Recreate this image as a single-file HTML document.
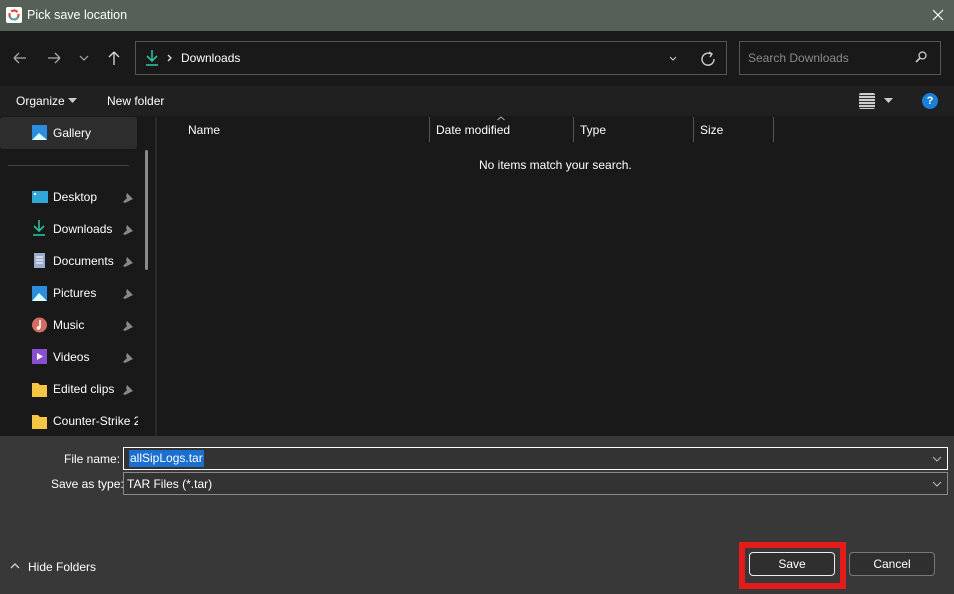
<!DOCTYPE html>
<html><head><meta charset="utf-8"><style>
*{box-sizing:border-box;margin:0;padding:0}
body{width:954px;height:594px;overflow:hidden;background:#191919;font-family:"Liberation Sans",sans-serif;font-size:12px;color:#fff;position:relative}
.a{position:absolute}
.t{white-space:nowrap}
</style></head><body>
<div class="a" style="left:0;top:0;width:954px;height:31px;background:#566056"></div>
<div class="a" style="left:6px;top:7px;width:16px;height:16px;background:#fff;border-radius:2px"></div>
<svg class="a" style="left:6px;top:7px" width="16" height="16"><circle cx="8" cy="8" r="4.5" fill="none" stroke="#e04a3a" stroke-width="2.2" stroke-dasharray="7 2"/><path d="M4 10 A4.5 4.5 0 0 0 12 10" fill="none" stroke="#4ab0b0" stroke-width="2.2"/></svg>
<div class="a t" style="left:27px;top:8px;font-size:12.5px;color:#fff">Pick save location</div>
<svg class="a" style="left:932px;top:9px" width="12" height="12"><path d="M1 1L11 11M11 1L1 11" stroke="#fff" stroke-width="1.2"/></svg>
<svg class="a" style="left:10px;top:50px" width="120" height="16"><path d="M4 8H16M4 8L9 3M4 8L9 13" stroke="#aaa" stroke-width="1.3" fill="none"/><path d="M38 8H50M50 8L45 3M50 8L45 13" stroke="#aaa" stroke-width="1.3" fill="none"/><path d="M70 6L74 10L78 6" stroke="#aaa" stroke-width="1.2" fill="none"/><path d="M104 2V15M104 2L99 7M104 2L109 7" stroke="#ddd" stroke-width="1.3" fill="none"/></svg>
<div class="a" style="left:135px;top:41px;width:592px;height:34px;border:1px solid #555"></div>
<svg class="a" style="left:145px;top:49px" width="40" height="18"><path d="M7 1V12M2 7L7 12L12 7" stroke="#2bbf9c" stroke-width="1.6" fill="none"/><path d="M1 16H13" stroke="#2bbf9c" stroke-width="1.6"/><path d="M23 6L26 9L23 12" stroke="#ddd" stroke-width="1.3" fill="none"/></svg>
<div class="a t" style="left:181px;top:51px">Downloads</div>
<svg class="a" style="left:668px;top:51px" width="50" height="16"><path d="M2 6L5 9L8 6" stroke="#ccc" stroke-width="1.1" fill="none"/><path d="M46 8A6 6 0 1 1 43 3" stroke="#ccc" stroke-width="1.4" fill="none"/><path d="M41 1L44 3L42 6" stroke="#ccc" stroke-width="1.4" fill="none"/></svg>
<div class="a" style="left:739px;top:41px;width:202px;height:34px;border:1px solid #555"></div>
<div class="a t" style="left:748px;top:51px;color:#8a8a8a">Search Downloads</div>
<svg class="a" style="left:914px;top:50px" width="14" height="14"><circle cx="8.5" cy="5.5" r="3.5" stroke="#ccc" stroke-width="1.3" fill="none"/><path d="M6 8L2 12" stroke="#ccc" stroke-width="1.6"/></svg>
<div class="a" style="left:0;top:86px;width:954px;height:30px;background:#202020"></div>
<div class="a t" style="left:16px;top:94px">Organize</div>
<svg class="a" style="left:68px;top:98px" width="10" height="6"><path d="M0 0H9L4.5 5Z" fill="#ccc"/></svg>
<div class="a t" style="left:107px;top:94px">New folder</div>
<div class="a" style="left:859px;top:93px;width:16px;height:16px;border-radius:2px;background-image:repeating-linear-gradient(#ccc 0 2px,#333 2px 3px)"></div>
<svg class="a" style="left:884px;top:98px" width="10" height="6"><path d="M0 0H9L4.5 5Z" fill="#ccc"/></svg>
<div class="a" style="left:922px;top:93px;width:16px;height:16px;border-radius:50%;background:#1a7fd8;color:#fff;font-weight:bold;font-size:11px;text-align:center;line-height:16px">?</div>
<div class="a" style="left:0;top:117px;width:137px;height:32px;background:#2d2d2d;border-radius:3px"></div>
<div class="a" style="left:8px;top:165px;width:121px;height:1px;background:#444"></div>
<div class="a" style="left:145px;top:150px;width:3px;height:120px;background:#8a8a8a;border-radius:2px"></div>
<div class="a" style="left:155px;top:117px;width:2px;height:319px;background:#2a2a2a"></div>
<svg class="a" style="left:31px;top:124px" width="17" height="312">
<rect x="1" y="1" width="15" height="15" fill="#2a8de0"/><path d="M1 16L8 9L16 16Z" fill="#dff"/>
<rect x="1" y="67" width="16" height="12" fill="#2fa7d8"/><rect x="3" y="69" width="2" height="2" fill="#fff"/>
<path d="M8 96V107M3 102L8 107L13 102" stroke="#2bbf9c" stroke-width="1.6" fill="none"/><path d="M2 111H14" stroke="#2bbf9c" stroke-width="1.6"/>
<rect x="3" y="129" width="11" height="15" fill="#9aaccc"/><path d="M5 133H12M5 136H12M5 139H12" stroke="#fff"/>
<rect x="1" y="162" width="15" height="15" fill="#2a8de0"/><path d="M1 177L8 169L16 177Z" fill="#dff"/>
<circle cx="8.5" cy="201" r="7.5" fill="#d46d5f"/><path d="M9 196V204" stroke="#fff" stroke-width="1.5"/><circle cx="7.5" cy="204" r="1.8" fill="#fff"/>
<rect x="1" y="225" width="15" height="15" fill="#8a4fd0"/><path d="M6 229L12 232.5L6 236Z" fill="#fff"/>
<path d="M1 259H7L9 261H16V273H1Z" fill="#f5c642"/>
<path d="M1 291H7L9 293H16V305H1Z" fill="#f5c642"/>
</svg>
<div class="a t" style="left:53px;top:126px">Gallery</div>
<div class="a t" style="left:53px;top:190px">Desktop</div>
<div class="a t" style="left:53px;top:222px">Downloads</div>
<div class="a t" style="left:53px;top:254px">Documents</div>
<div class="a t" style="left:53px;top:286px">Pictures</div>
<div class="a t" style="left:53px;top:318px">Music</div>
<div class="a t" style="left:53px;top:350px">Videos</div>
<div class="a t" style="left:53px;top:382px">Edited clips</div>
<div class="a t" style="left:53px;top:414px;width:85px;overflow:hidden">Counter-Strike 2</div>
<svg class="a" style="left:122px;top:192px" width="12" height="204">
<g fill="#888"><path d="M5 1L11 7L9 8L7 9L3 11L1 10L5 6L4 4Z"/><path d="M5 33L11 39L9 40L7 41L3 43L1 42L5 38L4 36Z"/><path d="M5 65L11 71L9 72L7 73L3 75L1 74L5 70L4 68Z"/><path d="M5 97L11 103L9 104L7 105L3 107L1 106L5 102L4 100Z"/><path d="M5 129L11 135L9 136L7 137L3 139L1 138L5 134L4 132Z"/><path d="M5 161L11 167L9 168L7 169L3 171L1 170L5 166L4 164Z"/><path d="M5 193L11 199L9 200L7 201L3 203L1 202L5 198L4 196Z"/></g></svg>
<div class="a t" style="left:188px;top:123px">Name</div>
<div class="a" style="left:429px;top:117px;width:1px;height:25px;background:#555"></div>
<svg class="a" style="left:497px;top:116px" width="8" height="5"><path d="M0.5 4L4 1L7.5 4" stroke="#aaa" fill="none"/></svg>
<div class="a t" style="left:436px;top:123px">Date modified</div>
<div class="a" style="left:573px;top:117px;width:1px;height:25px;background:#555"></div>
<div class="a t" style="left:580px;top:123px">Type</div>
<div class="a" style="left:693px;top:117px;width:1px;height:25px;background:#555"></div>
<div class="a t" style="left:700px;top:123px">Size</div>
<div class="a" style="left:773px;top:117px;width:1px;height:25px;background:#555"></div>
<div class="a t" style="left:479px;top:158px">No items match your search.</div>
<div class="a" style="left:0;top:436px;width:954px;height:158px;background:#383838"></div>
<div class="a t" style="left:64px;top:452px">File name:</div>
<div class="a t" style="left:51px;top:477px">Save as type:</div>
<div class="a" style="left:123px;top:447px;width:825px;height:23px;border:1px solid #fff;background:#333"></div>
<div class="a t" style="left:129px;top:450px;background:#1a6fcf;padding:1px 1px;line-height:15px">allSipLogs.tar</div>
<div class="a" style="left:123px;top:472px;width:825px;height:23px;border:1px solid #8a8a8a;background:#333"></div>
<div class="a t" style="left:127px;top:477px">TAR Files (*.tar)</div>
<svg class="a" style="left:932px;top:455px" width="12" height="34"><path d="M1 2L5 6L9 2" stroke="#bbb" fill="none"/><path d="M1 27L5 31L9 27" stroke="#bbb" fill="none"/></svg>
<svg class="a" style="left:10px;top:562px" width="12" height="8"><path d="M1 6L5 2L9 6" stroke="#ccc" stroke-width="1.4" fill="none"/></svg>
<div class="a t" style="left:28px;top:560px">Hide Folders</div>
<div class="a" style="left:739px;top:542px;width:107px;height:47px;border:6px solid #e31b1b;background:#383838"></div>
<div class="a" style="left:749px;top:552px;width:86px;height:24px;border:1px solid #eee;border-radius:4px;background:#2f2f2f;text-align:center;line-height:22px">Save</div>
<div class="a" style="left:849px;top:552px;width:86px;height:24px;border:1px solid #777;border-radius:4px;background:#2f2f2f;text-align:center;line-height:22px">Cancel</div>
</body></html>
